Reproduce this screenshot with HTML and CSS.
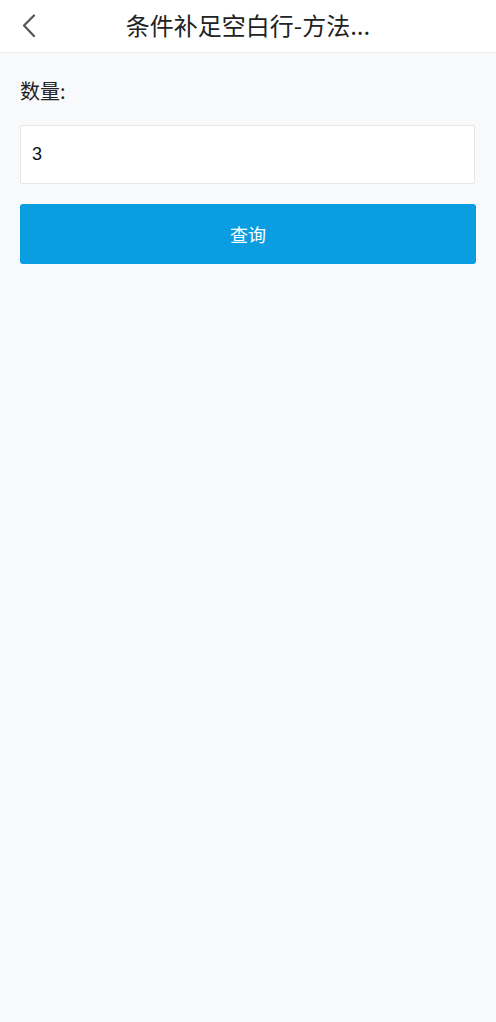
FILE: index.html
```html
<!DOCTYPE html>
<html lang="zh">
<head>
<meta charset="utf-8">
<link rel="stylesheet" href="styles.css">
</head>
<body>
<div class="page">
  <header class="nav">
    <span class="back">
      <svg width="16" height="24" viewBox="0 0 16 24"><path d="M12 1.5 L2 11.5 L12 22" fill="none" stroke="#555" stroke-width="2.2" stroke-linecap="round" stroke-linejoin="round"/></svg>
    </span>
    <h1 class="title">条件补足空白行-方法...</h1>
  </header>
  <main class="content">
    <label class="label">数量:</label>
    <div class="input">3</div>
    <button class="btn">查询</button>
  </main>
</div>
</body>
</html>
```
FILE: styles.css
```css
html, body { margin: 0; padding: 0; }
body {
  background: #f8f9fb;
  font-family: "Noto Sans CJK SC", "Noto Sans", sans-serif;
  color: #222;
  width: 496px;
  height: 1022px;
  overflow: hidden;
}
.page { display: flex; flex-direction: column; }
.nav {
  height: 53px;
  box-sizing: border-box;
  background: #fff;
  border-bottom: 1px solid #ececec;
  position: relative;
  display: flex;
  align-items: center;
  justify-content: center;
}
.back {
  position: absolute;
  left: 22px;
  top: 14px;
  width: 16px;
  height: 24px;
}
.back svg { display: block; }
.title {
  margin: 0;
  font-size: 24px;
  font-weight: 400;
  color: #222;
  line-height: 1;
  padding-bottom: 2px;
}
.content {
  display: flex;
  flex-direction: column;
  padding: 0 20px 0 20px;
}
.label {
  font-size: 20px;
  margin-top: 23px;
  line-height: 30px;
  color: #222;
}
.input {
  margin-top: 19px;
  height: 59px;
  box-sizing: border-box;
  background: #fff;
  border: 1px solid #e6e6e6;
  border-radius: 2px;
  padding-left: 11px;
  display: flex;
  align-items: center;
  font-family: "Liberation Sans", Arial, sans-serif;
  font-size: 18px;
  color: #111;
  width: 455px;
}
.btn {
  margin-top: 20px;
  height: 60px;
  width: 456px;
  border: none;
  border-radius: 3px;
  background: #0b9de2;
  color: #fff;
  font-family: "Noto Sans CJK SC", sans-serif;
  font-size: 18px;
  padding: 0;
}
```
